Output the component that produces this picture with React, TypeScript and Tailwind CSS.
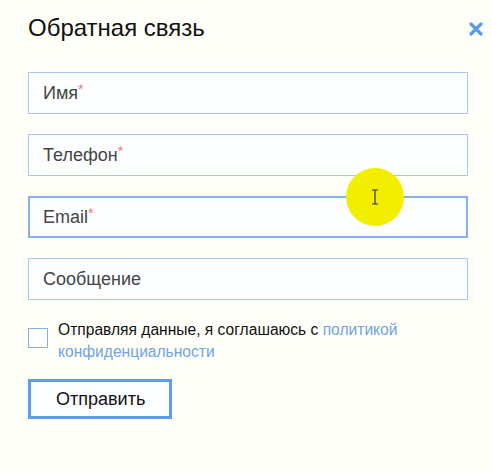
import React from 'react';

const fields = [
  { label: 'Имя', required: true, focused: false },
  { label: 'Телефон', required: true, focused: false },
  { label: 'Email', required: true, focused: true },
  { label: 'Сообщение', required: false, focused: false },
];

const App: React.FC = () => {
  return (
    <div
      className="relative w-[492px] h-[472px] bg-[#fffff9] overflow-hidden"
      style={{ fontFamily: '"Liberation Sans", Arial, sans-serif' }}
    >
      <div className="px-[28px] pt-[13px]">
        {/* Заголовок */}
        <div className="flex items-start justify-between">
          <h2 className="text-[24px] leading-[30px] text-[#111]">Обратная связь</h2>
          <svg width="14" height="14" viewBox="0 0 14 14" className="mt-[9px] mr-[-19px]">
            <path d="M2 2 L12 12 M12 2 L2 12" stroke="#5b9ae8" strokeWidth="3.2" strokeLinecap="round" />
          </svg>
        </div>

        {/* Поля */}
        <div className="mt-[29px] flex flex-col gap-[20px]">
          {fields.map((f) => (
            <div
              key={f.label}
              className={
                f.focused
                  ? 'h-[42px] w-[440px] border-2 border-[#7fb0f0] bg-[#fdfeff] flex items-center px-[13px]'
                  : 'h-[42px] w-[440px] border border-[#a9c6ee] bg-[#fdfeff] flex items-center px-[14px]'
              }
            >
              <span className="text-[18px] text-[#444]">
                {f.label}
                {f.required && <span className="text-[14px] text-[#e87878] relative top-[-5px]">*</span>}
              </span>
            </div>
          ))}
        </div>

        {/* Согласие */}
        <div className="mt-[19px] flex items-start gap-[10px]">
          <div className="mt-[9px] w-[20px] h-[20px] border border-[#8eaedc] bg-white shrink-0" />
          <p className="text-[15.6px] leading-[22px] text-[#111]">
            Отправляя данные, я соглашаюсь с{' '}
            <span className="text-[#6fa4e4]">политикой</span>
            <br />
            <span className="text-[#6fa4e4]">конфиденциальности</span>
          </p>
        </div>

        {/* Кнопка */}
        <button className="mt-[16px] w-[144px] h-[40px] border-[3px] border-[#5f9cee] bg-[#fdfeff] text-[18px] text-[#111] text-left pl-[25px]">
          Отправить
        </button>
      </div>

      {/* Курсор */}
      <div className="absolute left-[346px] top-[168px] w-[58px] h-[58px] rounded-full bg-[#f2ee00] flex items-center justify-center">
        <svg width="8" height="16" viewBox="0 0 8 16">
          <path d="M1 1 H7 M4 1 V15 M1 15 H7" stroke="#333" strokeWidth="1.2" fill="none" />
        </svg>
      </div>
    </div>
  );
};

export default App;
